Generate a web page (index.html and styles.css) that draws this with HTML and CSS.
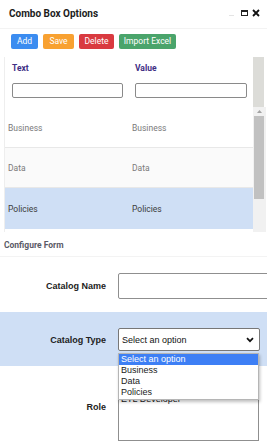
FILE: index.html
```
<!DOCTYPE html>
<html>
<head>
<meta charset="utf-8">
<link rel="stylesheet" href="styles.css">
</head>
<body>
<div class="dialog">
  <div class="titlebar">
    <span class="title">Combo Box Options</span>
    <span class="win-icons">
      <span class="min"></span>
      <span class="max"></span>
      <svg class="close" width="8" height="8" viewBox="0 0 8 8"><path d="M1 1L7 7M7 1L1 7" stroke="#111" stroke-width="1.8"/></svg>
    </span>
  </div>
  <div class="toolbar">
    <button class="btn btn-add">Add</button>
    <button class="btn btn-save">Save</button>
    <button class="btn btn-delete">Delete</button>
    <button class="btn btn-import">Import Excel</button>
  </div>
  <div class="grid">
    <div class="grid-main">
      <div class="grid-head">
        <div class="head-cell">
          <div class="head-label">Text</div>
          <input class="filter" type="text">
        </div>
        <div class="head-cell">
          <div class="head-label">Value</div>
          <input class="filter" type="text">
        </div>
      </div>
      <div class="row">
        <div class="cell c1">Business</div>
        <div class="cell c2">Business</div>
      </div>
      <div class="row alt">
        <div class="cell c1">Data</div>
        <div class="cell c2">Data</div>
      </div>
      <div class="row selected">
        <div class="cell c1">Policies</div>
        <div class="cell c2">Policies</div>
      </div>
    </div>
    <div class="scrollbar">
      <div class="sb-head"></div>
      <div class="sb-track">
        <div class="sb-arrow">
          <svg width="5" height="3" viewBox="0 0 5 3"><path d="M0 3L2.5 0L5 3Z" fill="#a3a3a3"/></svg>
        </div>
        <div class="sb-thumb"></div>
      </div>
    </div>
  </div>
  <div class="section-title">Configure Form</div>
  <div class="form">
    <div class="form-row row-name">
      <label class="form-label">Catalog Name</label>
      <input class="text-input" type="text">
    </div>
    <div class="form-row row-type">
      <label class="form-label">Catalog Type</label>
      <div class="select-wrap">
        <div class="select">
          <span>Select an option</span>
          <svg width="8" height="6" viewBox="0 0 8 6"><path d="M1 1.2L4 4.2L7 1.2" fill="none" stroke="#111" stroke-width="1.7"/></svg>
        </div>
        <div class="dropdown">
          <div class="opt active">Select an option</div>
          <div class="opt">Business</div>
          <div class="opt">Data</div>
          <div class="opt">Policies</div>
        </div>
      </div>
    </div>
    <div class="form-row row-role">
      <label class="form-label">Role</label>
      <div class="textarea">ETL Developer</div>
    </div>
  </div>
</div>
</body>
</html>
```
FILE: styles.css
```
* { box-sizing: border-box; }
html, body { margin: 0; padding: 0; background: #fff; }
body {
  width: 267px;
  height: 443px;
  overflow: hidden;
  font-family: Roboto, "Liberation Sans", Arial, sans-serif;
}
.dialog { width: 267px; }

.titlebar {
  height: 29px;
  display: flex;
  align-items: center;
  justify-content: space-between;
  padding: 0 7px 2px 9px;
  border-bottom: 1px solid #f3f3f3;
}
.title {
  font-size: 10px;
  font-weight: 700;
  color: #1c1c1c;
}
.win-icons { display: flex; align-items: center; gap: 4px; }
.min { width: 5px; height: 1px; background: #e4e4e4; margin-top: 5px; margin-right: 3px; }
.max { width: 7px; height: 6px; border: 1px solid #222; border-top-width: 2px; }
.close { display: block; }

.toolbar {
  display: flex;
  gap: 5px;
  padding: 5px 11px 8px 11px;
}
.btn {
  border: none;
  border-radius: 2px;
  height: 15px;
  padding: 0;
  font-family: Roboto, "Liberation Sans", Arial, sans-serif;
  font-size: 8.5px;
  color: #fff;
  line-height: 15px;
  white-space: nowrap;
  text-align: center;
  flex-shrink: 0;
}
.btn-add { background: #3b8cf0; width: 27px; }
.btn-save { background: #f8a131; width: 31px; }
.btn-delete { background: #d93a40; width: 35px; }
.btn-import { background: #4aa46b; width: 57px; }

.grid {
  display: flex;
  margin-left: 4px;
  height: 175px;
}
.grid-main {
  width: 249px;
  border-left: 1px solid #eeeeee;
}
.grid-head {
  height: 51px;
  display: flex;
  padding-top: 6px;
}
.head-cell { width: 123px; padding-left: 7px; }
.head-label {
  font-size: 8.5px;
  font-weight: 700;
  color: #3f2f84;
  height: 20px;
  line-height: 11px;
}
.filter {
  display: block;
  width: 111px;
  height: 15px;
  border: 1px solid #8a8a8a;
  border-radius: 2px;
  margin: 0;
  padding: 0;
  background: #fff;
}
.head-cell + .head-cell .filter { width: 112px; }

.row {
  display: flex;
  height: 40px;
  align-items: center;
  border-bottom: 1px solid #e8e8e8;
  font-size: 8.5px;
  color: #7a7a7a;
}
.row.alt { background: #fafafa; }
.row.selected { background: #cfdff5; color: #3c3c3c; border-bottom: none; height: 41px; }
.cell.c1 { width: 127px; padding-left: 3px; }

.scrollbar {
  width: 13px;
  display: flex;
  flex-direction: column;
}
.sb-head { height: 50px; background: #dcdcd8; margin-right: 2px; }
.sb-track { flex: 1; background: #f1f1f1; }
.sb-arrow { height: 9px; display: flex; justify-content: center; align-items: center; padding-right: 1px; }
.sb-thumb { height: 83px; background: #c1c1c1; margin: 0 2px 0 1px; }

.section-title {
  font-size: 8.5px;
  font-weight: 700;
  color: #5a5a66;
  padding: 8px 0 0 4px;
  height: 25px;
  border-bottom: 1px solid #f3f3f3;
}

.form-row {
  display: flex;
  align-items: center;
}
.form-label {
  width: 106px;
  text-align: right;
  font-family: "Liberation Sans", Arial, sans-serif;
  font-size: 9px;
  font-weight: 700;
  color: #222;
  margin-right: 12px;
  flex-shrink: 0;
}
.row-name { height: 55px; padding-top: 3px; }
.text-input {
  width: 155px;
  height: 26px;
  border: 1px solid #8f8f8f;
  border-radius: 2px;
  margin: 0;
  flex-shrink: 0;
}
.row-type {
  height: 54px;
  background: #cfdff5;
  padding-top: 1px;
}
.select-wrap { position: relative; }
.select {
  width: 142px;
  height: 23px;
  background: #fff;
  border: 1px solid #777;
  border-radius: 2px;
  display: flex;
  align-items: center;
  justify-content: space-between;
  padding: 0 5px 0 3px;
  font-family: "Liberation Sans", Arial, sans-serif;
  font-size: 9px;
  color: #111;
}
.dropdown {
  position: absolute;
  left: 0;
  top: 25px;
  width: 141px;
  background: #fff;
  border: 1px solid #b5b5b5;
  box-shadow: 1px 2px 3px rgba(0,0,0,0.25);
  z-index: 5;
  padding-bottom: 1px;
}
.opt {
  font-family: "Liberation Sans", Arial, sans-serif;
  font-size: 9px;
  height: 11px;
  line-height: 11px;
  padding-left: 2px;
  color: #1a1a1a;
}
.opt.active { background: #3d7ff5; color: #fff; }

.row-role { height: 80px; align-items: flex-start; }
.row-role .form-label { margin-top: 36px; }
.textarea {
  margin-top: 20px;
  width: 141px;
  height: 55px;
  border: 1px solid #8f8f8f;
  font-family: "Liberation Sans", Arial, sans-serif;
  font-size: 9px;
  line-height: 11px;
  color: #222;
  padding: 7px 2px 0;
  flex-shrink: 0;
}
```
